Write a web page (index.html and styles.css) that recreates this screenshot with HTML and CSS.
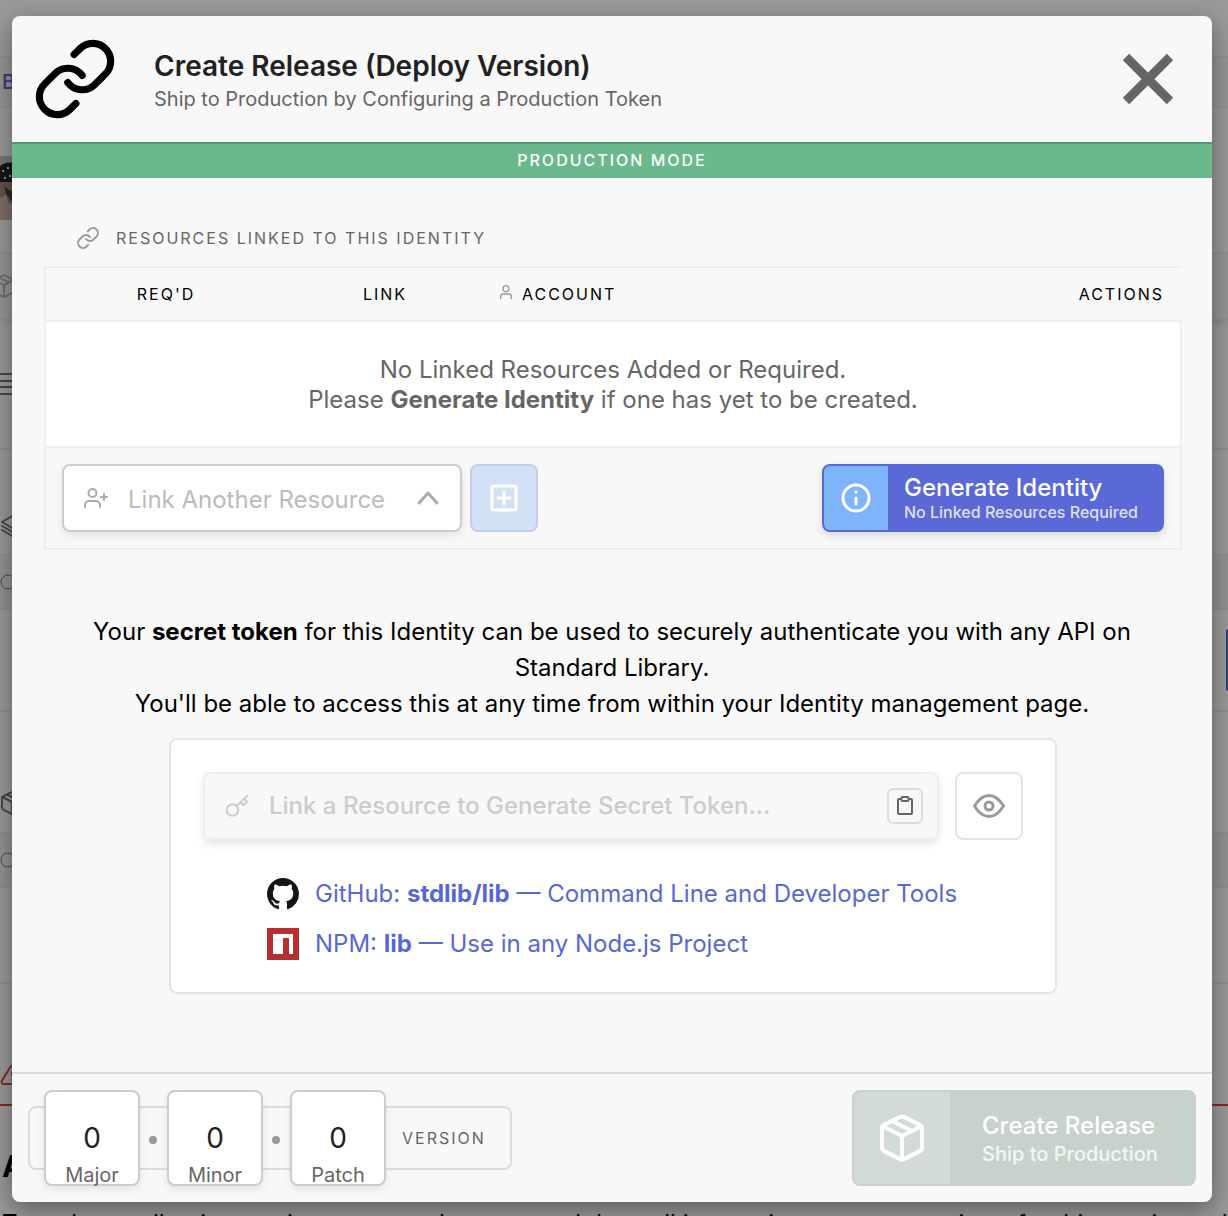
FILE: index.html
```html
<!DOCTYPE html>
<html lang="en">
<head>
<meta charset="utf-8">
<meta name="viewport" content="width=device-width, initial-scale=1">
<title>Create Release</title>
<link rel="stylesheet" href="styles.css">
</head>
<body>
<svg class="sprite" aria-hidden="true">
  <symbol id="i-link" viewBox="0 0 24 24"><path d="M10 13a5 5 0 0 0 7.54.54l3-3a5 5 0 0 0-7.07-7.07l-1.72 1.71"/><path d="M14 11a5 5 0 0 0-7.54-.54l-3 3a5 5 0 0 0 7.07 7.07l1.71-1.71"/></symbol>
  <symbol id="i-package" viewBox="0 0 24 24"><path d="M12.89 1.45l8 4A2 2 0 0 1 22 7.24v9.53a2 2 0 0 1-1.11 1.79l-8 4a2 2 0 0 1-1.79 0l-8-4a2 2 0 0 1-1.1-1.8V7.24a2 2 0 0 1 1.11-1.79l8-4a2 2 0 0 1 1.78 0z"/><path d="M2.32 6.16L12 11l9.68-4.84M12 22.76V11M7 3.5l10 5"/></symbol>
  <symbol id="i-user" viewBox="0 0 24 24"><path d="M20 22v-3a4 4 0 0 0-4-4H8a4 4 0 0 0-4 4v3"/><circle cx="12" cy="7" r="4.5"/></symbol>
</svg>

<div class="page" aria-hidden="true">
  <div class="band nav"></div>
  <div class="band crumbs"><span>Build</span></div>
  <div class="band profile"><svg class="avatar" viewBox="0 0 64 64"><rect width="64" height="64" fill="#c9c7c4"/><path d="M0 10Q8 3 20 10L30 26H0z" fill="#23242c"/><path d="M0 26h26v22H0z" fill="#a18b84"/><path d="M0 42l6-4 8 26H0z" fill="#cfb5ac"/><path d="M4 30l8 6v10l-6-8z" fill="#4e403c"/><path d="M2 14h2v2H2zM7 11h2v2H7zM9 19h2v2H9zM4 21h2v2H4z" fill="#eee"/></svg></div>
  <div class="band tabs"><svg class="icon faint"><use href="#i-package"/></svg></div>
  <div class="band menu"><svg class="icon" viewBox="0 0 24 24"><path d="M0 2h24M0 9h24M0 15h24M0 22h24"/></svg></div>
  <div class="band layers"><svg class="icon" viewBox="0 0 24 24"><path d="M14 2L2 9l12 7 10-7zM2 13l12 7 10-7M2 17l12 7 10-7"/></svg></div>
  <div class="band option"><svg class="icon" viewBox="0 0 24 24"><circle cx="8" cy="12" r="7"/></svg></div>
  <div class="band action"><i></i></div>
  <div class="band package"><svg class="icon"><use href="#i-package"/></svg></div>
  <div class="band option"><svg class="icon" viewBox="0 0 24 24"><circle cx="8" cy="12" r="7"/></svg></div>
  <div class="band spare"></div>
  <div class="band warning"><svg class="icon" viewBox="0 0 24 24"><path d="M10.3 3.9L1.8 18a2 2 0 0 0 1.7 3h17a2 2 0 0 0 1.7-3L13.7 3.9a2 2 0 0 0-3.4 0zM12 9v4M12 17v.1"/></svg></div>
  <div class="article">
    <h2>API</h2>
    <p>To make a collection, assign a custom logo or reach how all interactions must pass views for this version, other</p>
  </div>
</div>

<div class="overlay">
  <section class="modal" role="dialog" aria-labelledby="title">
    <header class="head">
      <svg class="head-icon"><use href="#i-link"/></svg>
      <div class="head-text">
        <h1 id="title">Create Release (Deploy Version)</h1>
        <p>Ship to Production by Configuring a Production Token</p>
      </div>
      <button class="close" type="button" aria-label="Close"><svg viewBox="0 0 52 52"><path d="M4 4l44 44M48 4L4 48"/></svg></button>
    </header>
    <div class="mode">PRODUCTION MODE</div>

    <div class="body">
      <h2 class="label"><svg><use href="#i-link"/></svg>RESOURCES LINKED TO THIS IDENTITY</h2>
      <table class="resources">
        <thead>
          <tr><th class="col-req">REQ'D</th><th class="col-link">LINK</th><th class="col-account"><svg><use href="#i-user"/></svg>ACCOUNT</th><th class="col-actions">ACTIONS</th></tr>
        </thead>
        <tbody>
          <tr><td colspan="4">No Linked Resources Added or Required.<br>Please <strong>Generate Identity</strong> if one has yet to be created.</td></tr>
        </tbody>
        <tfoot>
          <tr><td colspan="4">
            <div class="tools">
              <div class="picker">
                <svg viewBox="0 0 24 24"><path d="M16 21v-2a4 4 0 0 0-4-4H5a4 4 0 0 0-4 4v2M20 8v6M23 11h-6"/><circle cx="8.5" cy="7" r="4"/></svg>
                <select aria-label="Link Another Resource"><option>Link Another Resource</option></select>
                <svg class="chevron" viewBox="0 0 24 24"><path d="M3 17l9-10 9 10"/></svg>
              </div>
              <button class="add" type="button" aria-label="Add resource"><svg viewBox="0 0 32 32"><rect x="4" y="4" width="24" height="24" rx="2"/><path d="M16 10v12M10 16h12"/></svg></button>
              <button class="split generate" type="button">
                <span class="split-icon"><svg viewBox="0 0 32 32"><circle cx="16" cy="16" r="13"/><path d="M16 16v6M16 10v.1"/></svg></span>
                <span class="split-text"><b>Generate Identity</b><small>No Linked Resources Required</small></span>
              </button>
            </div>
          </td></tr>
        </tfoot>
      </table>

      <p class="intro">Your <strong>secret token</strong> for this Identity can be used to securely authenticate you with any API on Standard Library.<br>You'll be able to access this at any time from within your Identity management page.</p>

      <div class="card">
        <div class="token-row">
          <div class="token">
            <svg viewBox="0 0 24 24"><circle cx="7.5" cy="16" r="5.8"/><path d="M11.600 11.900L22.400 1.600M15.500 8.200l3 3L22 7.500l-3-3"/></svg>
            <input type="text" aria-label="Secret token" placeholder="Link a Resource to Generate Secret Token..." readonly>
            <button class="copy" type="button" aria-label="Copy token"><svg viewBox="0 0 20 20"><path d="M6 3H4a1 1 0 0 0-1 1v13a1 1 0 0 0 1 1h12a1 1 0 0 0 1-1V4a1 1 0 0 0-1-1h-2"/><rect x="6.500" y="1" width="7" height="4" rx="1"/></svg></button>
          </div>
          <button class="reveal" type="button" aria-label="Show token"><svg viewBox="0 0 32 24"><path d="M1.500 12Q8 1.500 16 1.500T30.500 12Q24 22.500 16 22.500T1.500 12z"/><circle cx="16" cy="12" r="4"/></svg></button>
        </div>
        <ul class="links">
          <li><svg viewBox="0 0 16 16"><path fill="#151513" d="M8 0C3.580 0 0 3.580 0 8c0 3.540 2.290 6.530 5.470 7.590.4.070.55-.17.55-.38 0-.19-.01-.82-.01-1.490-2.010.37-2.530-.49-2.690-.94-.09-.23-.48-.94-.82-1.130-.28-.15-.68-.52-.01-.53.63-.01 1.080.58 1.230.82.72 1.210 1.870.87 2.330.66.070-.52.28-.87.51-1.070-1.780-.2-3.640-.89-3.640-3.950 0-.87.31-1.590.82-2.150-.08-.2-.36-1.020.08-2.120 0 0 .67-.21 2.200.82.64-.18 1.320-.27 2-.27s1.360.09 2 .27c1.530-1.040 2.200-.82 2.200-.82.44 1.100.16 1.920.08 2.120.51.56.82 1.270.82 2.150 0 3.070-1.870 3.750-3.650 3.950.29.25.54.73.54 1.480 0 1.070-.01 1.930-.01 2.200 0 .21.15.46.55.38A8.010 8.010 0 0 0 16 8c0-4.420-3.580-8-8-8z"/></svg><a href="#github">GitHub: <strong>stdlib/lib</strong> — Command Line and Developer Tools</a></li>
          <li><svg viewBox="0 0 32 32"><path fill="#b5302e" d="M0 0h32v32H0z"/><path fill="#fff" d="M6 6h20v20h-4V10h-6v16H6z"/></svg><a href="#npm">NPM: <strong>lib</strong> — Use in any Node.js Project</a></li>
        </ul>
      </div>
    </div>

    <footer class="foot">
      <div class="version">
        <label class="tile"><input type="text" value="0"><span>Major</span></label>
        <i class="dot"></i>
        <label class="tile"><input type="text" value="0"><span>Minor</span></label>
        <i class="dot"></i>
        <label class="tile"><input type="text" value="0"><span>Patch</span></label>
        <span class="version-label">VERSION</span>
      </div>
      <button class="split release" type="button">
        <span class="split-icon"><svg><use href="#i-package"/></svg></span>
        <span class="split-text"><b>Create Release</b><small>Ship to Production</small></span>
      </button>
    </footer>
  </section>
</div>
</body>
</html>
```

FILE: styles.css
```css
* { box-sizing: border-box; }

body {
  margin: 0;
  position: relative;
  overflow: hidden;
  background: #fff;
  color: #000;
  font-family: Inter, "Liberation Sans", sans-serif;
  font-size: 24px;
  line-height: 36px;
}

h1, h2, p, ul { margin: 0; padding: 0; }
button, input, select { font: inherit; margin: 0; }
button { padding: 0; cursor: pointer; }
svg { display: block; flex: none; fill: none; stroke: currentColor; stroke-width: 2; stroke-linecap: round; stroke-linejoin: round; }
.sprite { position: absolute; width: 0; height: 0; }

/* Page behind the dialog */
.page { height: 100vh; overflow: hidden; }
.band { display: flex; align-items: center; border-bottom: 2px solid #efefef; color: #777; }
.band .icon { width: 24px; height: 24px; }
.nav { height: 58px; }
.crumbs { height: 50px; background: #f8f8f8; color: #5768d3; font-size: 20px; font-weight: 500; }
.crumbs span { padding-left: 2px; }
.profile { height: 146px; }
.avatar { width: 64px; height: 64px; margin-top: 16px; stroke: none; }
.tabs { height: 66px; background: #f8f8f8; box-shadow: 0 4px 8px rgba(0, 0, 0, 0.1); }
.band .faint { color: #bbb; margin-left: -8px; }
.menu { height: 130px; }
.layers { height: 106px; padding-top: 46px; }
.option { height: 54px; background: #f4f4f4; }
.option .icon { stroke-width: 1; }
.action { height: 102px; justify-content: flex-end; }
.action i { width: 2px; height: 62px; border-radius: 8px 0 0 8px; background: #5768d3; }
.package { height: 122px; padding-top: 62px; }
.spare { height: 96px; }
.warning { height: 122px; padding-top: 62px; border-color: #dc4a40; color: #dc4a40; }
.article { padding: 40px 0 0 2px; white-space: nowrap; }
.article h2 { font-size: 30px; line-height: 40px; }
.article p { margin-top: 20px; line-height: 36px; }

/* Dialog */
.overlay {
  position: absolute;
  top: 0;
  right: 0;
  left: 0;
  min-height: 100vh;
  padding: 16px 16px 14px 12px;
  background: rgba(0, 0, 0, 0.4);
}
.modal { overflow: hidden; border-radius: 8px; background: #f8f8f8; box-shadow: 0 8px 24px rgba(0, 0, 0, 0.4); }

.head { display: flex; align-items: center; height: 126px; padding: 0 38px 0 20px; }
.head-icon { width: 86px; height: 86px; }
.head-text { flex: 1; margin-left: 36px; padding-top: 4px; }
.head h1 { color: #222; font-size: 28px; font-weight: 600; line-height: 36px; }
.head p { color: #666; font-size: 20px; line-height: 30px; }
.close { border: 0; background: none; color: #666; }
.close svg { width: 52px; height: 52px; stroke-width: 9; stroke-linecap: butt; }

.mode { padding: 2px 0 4px; border-top: 2px solid #53966f; background: #6ab98c; color: #fff; font-size: 16px; font-weight: 500; line-height: 28px; letter-spacing: 2px; text-align: center; }

.body { padding: 48px 30px 78px 32px; }

.label { display: flex; align-items: center; gap: 16px; padding: 0 32px; margin-bottom: 16px; color: #666; font-size: 16px; font-weight: 400; line-height: 24px; letter-spacing: 2px; }
.label svg { width: 24px; height: 24px; color: #999; }

.resources { width: 100%; table-layout: fixed; border-spacing: 0; border-left: 2px solid #eee; border-top: 2px solid #eee; }
.resources th, .resources td { padding: 0; border-bottom: 2px solid #eee; }
.resources th { height: 54px; font-size: 16px; font-weight: 400; line-height: 24px; letter-spacing: 2px; }
.resources td { border-right: 2px solid #eee; }
.resources .col-req { width: 240px; }
.resources .col-link { width: 198px; }
.resources .col-account { padding-left: 14px; text-align: left; }
.col-account svg { display: inline-block; width: 16px; height: 16px; margin-right: 8px; color: #999; }
.resources .col-actions { padding-right: 18px; text-align: right; }
.resources tbody td { padding: 33px 16px 31px; background: #fff; color: #666; line-height: 30px; text-align: center; }
.tools { display: flex; gap: 8px; padding: 16px; }

.picker { display: flex; align-items: center; width: 400px; height: 68px; padding: 0 20px; border: 2px solid #ccc; border-radius: 8px; background: #fff; box-shadow: 0 4px 8px rgba(0, 0, 0, 0.08); color: #aaa; }
.picker svg { width: 24px; height: 24px; }
.picker select { flex: 1; min-width: 0; height: 64px; padding: 4px 20px 0; border: 0; appearance: none; background: none; color: #bbb; }
.picker .chevron { stroke-width: 3; }

.add { display: grid; place-items: center; width: 68px; height: 68px; border: 2px solid #c6cbe8; border-radius: 8px; background: #d2e1f5; color: #fff; }
.add svg, .generate svg { width: 32px; height: 32px; stroke-width: 3; }

.split { display: flex; overflow: hidden; border: 2px solid; border-radius: 8px; color: #fff; text-align: left; }
.split-icon { display: grid; place-items: center; }
.split-text { display: flex; flex-direction: column; justify-content: center; }
.split b { font-weight: 500; line-height: 28px; }
.split small { font-weight: 500; opacity: 0.8; }
.generate { width: 342px; height: 68px; margin-left: auto; border-color: #5a69d5; background: #5a69d5; box-shadow: 0 4px 8px rgba(0, 0, 0, 0.12); }
.generate .split-icon { width: 64px; background: #7fb4fa; }
.generate .split-text { padding: 0 16px; }
.generate small { font-size: 16px; line-height: 20px; }

.intro { padding: 64px 34px 16px 32px; text-align: center; }

.card { width: 888px; max-width: 100%; margin: 0 auto; padding: 32px; border: 2px solid #e4e4e4; border-radius: 8px; background: #fff; }
.token-row { display: flex; gap: 16px; }
.token { flex: 1; display: flex; align-items: center; height: 68px; padding: 0 14px 0 20px; border: 2px solid #eee; border-radius: 8px; background: #f8f8f8; box-shadow: 0 4px 8px rgba(0, 0, 0, 0.1); color: #ccc; }
.token > svg { width: 24px; height: 24px; }
.token input { flex: 1; min-width: 0; padding: 0 20px; border: 0; background: none; font-weight: 500; }
.token input::placeholder { color: #ccc; opacity: 1; }
.copy { display: grid; place-items: center; width: 36px; height: 36px; border: 2px solid #ddd; border-radius: 6px; background: none; color: #666; }
.copy svg { width: 20px; height: 20px; }
.reveal { display: grid; place-items: center; width: 68px; height: 68px; border: 2px solid #e4e4e4; border-radius: 8px; background: #fff; color: #999; }
.reveal svg { width: 32px; height: 24px; stroke-width: 3; }

.links { display: grid; gap: 18px; margin-top: 38px; padding-left: 64px; list-style: none; }
.links li { display: flex; align-items: center; gap: 16px; line-height: 32px; }
.links svg { width: 32px; height: 32px; stroke: none; }
.links a { color: #5768d3; text-decoration: none; }

.foot { display: flex; align-items: center; justify-content: space-between; padding: 16px; border-top: 2px solid #ddd; }
.version { display: flex; align-items: center; height: 64px; padding: 0 24px 0 14px; border: 2px solid #ddd; border-radius: 8px; }
.tile { display: flex; flex-direction: column; width: 96px; height: 96px; padding-top: 28px; border: 2px solid #ccc; border-radius: 8px; background: #fff; box-shadow: 0 4px 8px rgba(0, 0, 0, 0.08); text-align: center; }
.tile input { width: 100%; height: 36px; padding: 0; border: 0; background: none; color: #222; font-size: 28px; text-align: center; }
.tile span { color: #666; font-size: 20px; line-height: 38px; }
.dot { width: 8px; height: 8px; margin: 4px 10px 0 9px; border-radius: 50%; background: #999; }
.version-label { padding-left: 16px; color: #666; font-size: 16px; line-height: 24px; letter-spacing: 2px; }

.release { width: 344px; height: 96px; border-color: #c8d2cc; background: #c8d2cc; }
.release .split-icon { width: 96px; background: #d3dbd6; }
.release svg { width: 48px; height: 48px; }
.release .split-text { padding: 4px 32px 0; }
.release small { font-size: 20px; line-height: 28px; }
```
